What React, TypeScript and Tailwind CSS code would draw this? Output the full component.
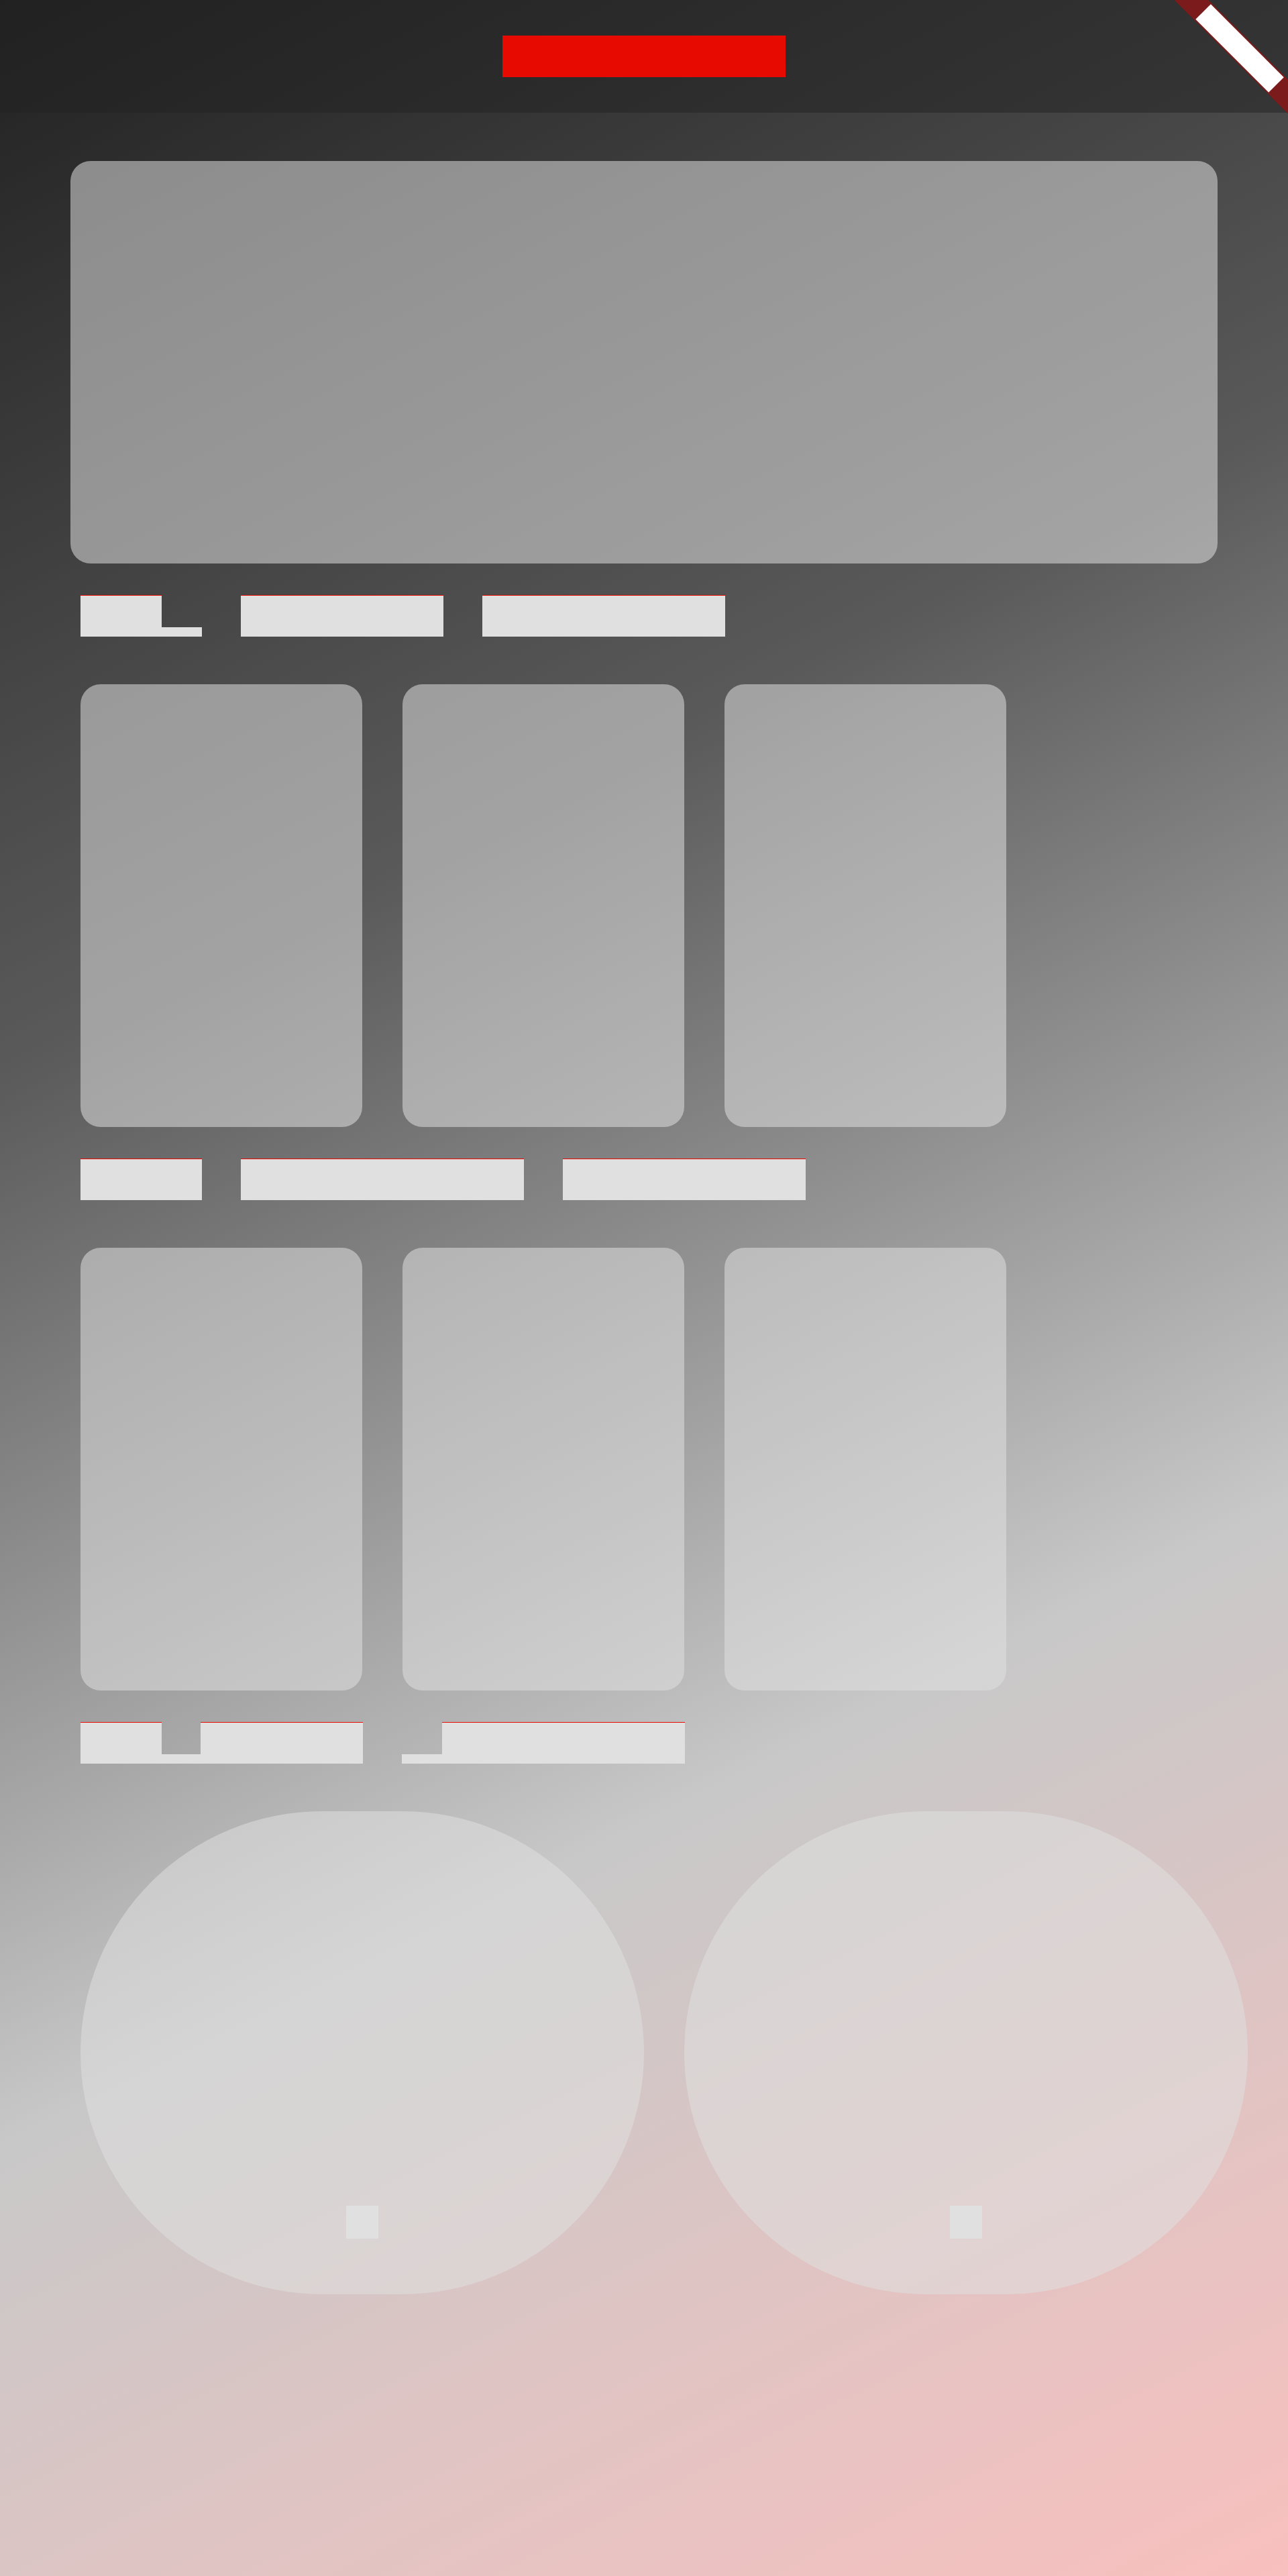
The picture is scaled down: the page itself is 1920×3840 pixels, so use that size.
import type { ReactNode } from 'react';

type Segment = 'wide' | 'low';

interface Glyphs {
  kind: Segment;
  width: string;
}

const firstHeading: Glyphs[][] = [
  [
    { kind: 'wide', width: 'w-[121px]' },
    { kind: 'low', width: 'w-[60px]' },
  ],
  [{ kind: 'wide', width: 'w-[302px]' }],
  [{ kind: 'wide', width: 'w-[362px]' }],
];

const secondHeading: Glyphs[][] = [
  [{ kind: 'wide', width: 'w-[181px]' }],
  [{ kind: 'wide', width: 'w-[422px]' }],
  [{ kind: 'wide', width: 'w-[362px]' }],
];

const thirdHeading: Glyphs[][] = [
  [
    { kind: 'wide', width: 'w-[121px]' },
    { kind: 'low', width: 'w-[58px]' },
    { kind: 'wide', width: 'w-[242px]' },
  ],
  [
    { kind: 'low', width: 'w-[60px]' },
    { kind: 'wide', width: 'w-[362px]' },
  ],
];

function Heading({ words }: { words: Glyphs[][] }) {
  return (
    <div className="flex h-[62px] items-end gap-[58px] pl-[120px]">
      {words.map((word, i) => (
        <div key={i} className="flex items-end">
          {word.map((part, j) => (
            <div
              key={j}
              className={
                part.kind === 'wide'
                  ? `${part.width} h-[62px] border-t border-[#e60a00] bg-[#e0e0e0]`
                  : `${part.width} h-[14px] bg-[#e0e0e0]`
              }
            />
          ))}
        </div>
      ))}
    </div>
  );
}

function Section({ words, children }: { words: Glyphs[][]; children: ReactNode }) {
  return (
    <section className="pt-[47px]">
      <Heading words={words} />
      <div className="mt-[71px]">{children}</div>
    </section>
  );
}

function CardRow() {
  return (
    <div className="flex gap-[60px] pl-[120px]">
      {[0, 1, 2].map((i) => (
        <div key={i} className="h-[660px] w-[420px] rounded-[30px] bg-[#e0e0e0]/54" />
      ))}
    </div>
  );
}

function CornerBanner() {
  return (
    <div className="absolute top-0 right-0 size-[169px] overflow-hidden">
      <div className="absolute top-[54px] -left-[53px] flex h-9 w-[300px] rotate-45 items-center justify-center bg-[#7c1b1b]">
        <div className="h-8 w-[154px] bg-white" />
      </div>
    </div>
  );
}

export default function App() {
  return (
    <div className="relative min-h-screen bg-[linear-gradient(153.435deg,#212121_0%,#5a5a5a_33.333%,#c8c8c8_66.667%,#f8c0be_100%)]">
      <header className="flex h-[168px] items-center justify-center bg-[#212121]/50">
        <div className="h-[62px] w-[422px] bg-[#e60a00]" />
      </header>
      <CornerBanner />
      <main className="pt-[72px]">
        <div className="mx-[105px] h-[600px] rounded-[30px] bg-[#e0e0e0]/54" />
        <Section words={firstHeading}>
          <CardRow />
        </Section>
        <Section words={secondHeading}>
          <CardRow />
        </Section>
        <Section words={thirdHeading}>
          <div className="flex gap-[60px] pr-[60px] pl-[120px]">
            {[0, 1].map((i) => (
              <div
                key={i}
                className="flex h-[720px] flex-1 items-end justify-center rounded-[360px] bg-[#e0e0e0]/54 pb-[83px]"
              >
                <div className="h-[49px] w-12 bg-[#e0e0e0]" />
              </div>
            ))}
          </div>
        </Section>
      </main>
    </div>
  );
}
